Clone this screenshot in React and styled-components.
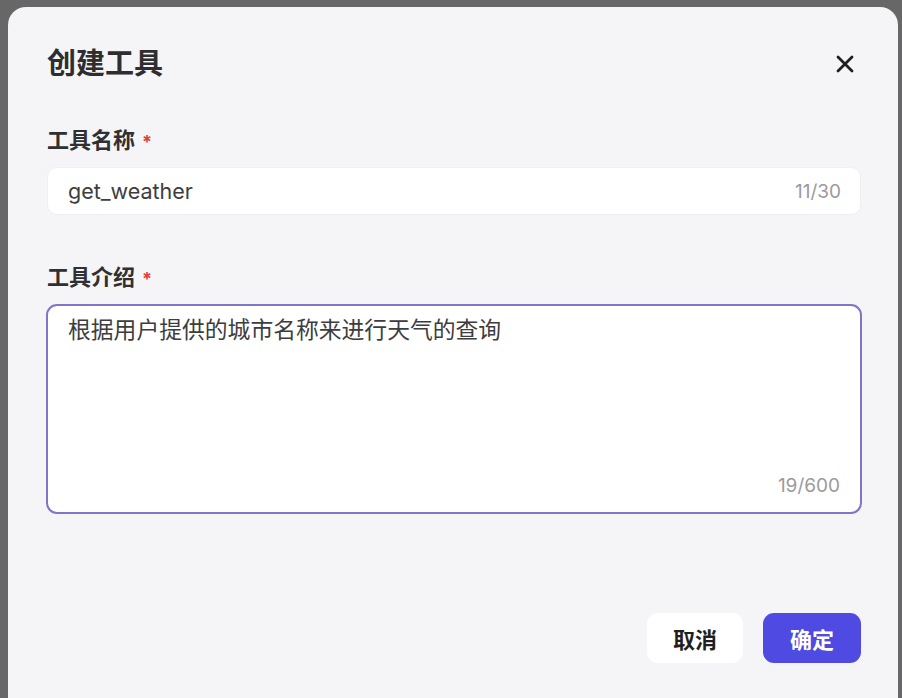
import styled, { createGlobalStyle } from 'styled-components';

const GlobalStyle = createGlobalStyle`
  html, body {
    margin: 0;
    padding: 0;
    height: 100%;
    background: #676767;
    overflow: hidden;
  }
  body {
    font-family: Inter, 'Noto Sans CJK SC', sans-serif;
  }
  * {
    box-sizing: border-box;
  }
`;

// Fondo oscuro detrás del diálogo
const Backdrop = styled.div`
  padding: 7px 4px 0 8px;
  height: 100vh;
`;

const Dialog = styled.div`
  display: flex;
  flex-direction: column;
  width: 890px;
  height: 710px;
  padding: 40px 37px 0 39px;
  background: #f5f5f7;
  border-radius: 18px;
`;

const Header = styled.div`
  display: flex;
  justify-content: space-between;
  align-items: center;
  height: 34px;
`;

const Title = styled.h2`
  margin: 0;
  font-size: 29px;
  line-height: 34px;
  font-weight: 700;
  color: #2e2e30;
`;

const CloseButton = styled.button`
  display: flex;
  align-items: center;
  justify-content: center;
  width: 28px;
  height: 28px;
  margin-right: 2px;
  padding: 0;
  border: none;
  background: transparent;
  color: #1f1f1f;
  cursor: pointer;
`;

const Field = styled.div`
  display: flex;
  flex-direction: column;
  gap: 10px;
  margin-top: ${(p) => p.$top}px;
`;

const Label = styled.label`
  font-size: 22px;
  line-height: 30px;
  font-weight: 700;
  color: #303033;

  span {
    color: #e0403a;
    margin-left: 7px;
    font-size: 18px;
  }
`;

const InputBox = styled.div`
  display: flex;
  align-items: center;
  justify-content: space-between;
  height: 48px;
  padding: 0 19px 0 20px;
  background: #fff;
  border-radius: 10px;
  border: 1px solid #efeff2;
`;

const InputText = styled.span`
  font-size: 21.5px;
  color: #3d3d40;
`;

const Counter = styled.span`
  font-size: 19px;
  color: #9a9a9e;
`;

const TextArea = styled.div`
  display: flex;
  flex-direction: column;
  justify-content: space-between;
  height: 210px;
  margin-left: -1px;
  margin-right: -1px;
  padding: 9px 20px 15px 20px;
  background: #fff;
  border: 2px solid #7e76c9;
  border-radius: 11px;
`;

const AreaText = styled.p`
  margin: 0;
  font-size: 22.8px;
  line-height: 30px;
  color: #3d3d40;
`;

const AreaCounter = styled(Counter)`
  align-self: flex-end;
`;

const Footer = styled.div`
  display: flex;
  justify-content: flex-end;
  gap: 20px;
  margin-top: 99px;
`;

const Button = styled.button`
  height: 50px;
  padding: 0;
  width: ${(p) => (p.$primary ? 98 : 96)}px;
  border: none;
  border-radius: 11px;
  font-family: inherit;
  font-size: 22px;
  font-weight: 700;
  cursor: pointer;
  background: ${(p) => (p.$primary ? '#4e4ae2' : '#ffffff')};
  color: ${(p) => (p.$primary ? '#ffffff' : '#1f1f22')};
`;

const App = () => {
  return (
    <>
      <GlobalStyle />
      <Backdrop>
        <Dialog>
          <Header>
            <Title>创建工具</Title>
            <CloseButton aria-label="关闭">
              <svg width="18" height="18" viewBox="0 0 18 18">
                <path d="M2 2 L16 16 M16 2 L2 16" stroke="currentColor" strokeWidth="2.8" strokeLinecap="round" />
              </svg>
            </CloseButton>
          </Header>

          <Field $top={44}>
            <Label>工具名称<span>*</span></Label>
            <InputBox>
              <InputText>get_weather</InputText>
              <Counter>11/30</Counter>
            </InputBox>
          </Field>

          <Field $top={47}>
            <Label>工具介绍<span>*</span></Label>
            <TextArea>
              <AreaText>根据用户提供的城市名称来进行天气的查询</AreaText>
              <AreaCounter>19/600</AreaCounter>
            </TextArea>
          </Field>

          <Footer>
            <Button>取消</Button>
            <Button $primary>确定</Button>
          </Footer>
        </Dialog>
      </Backdrop>
    </>
  );
};

export default App;
